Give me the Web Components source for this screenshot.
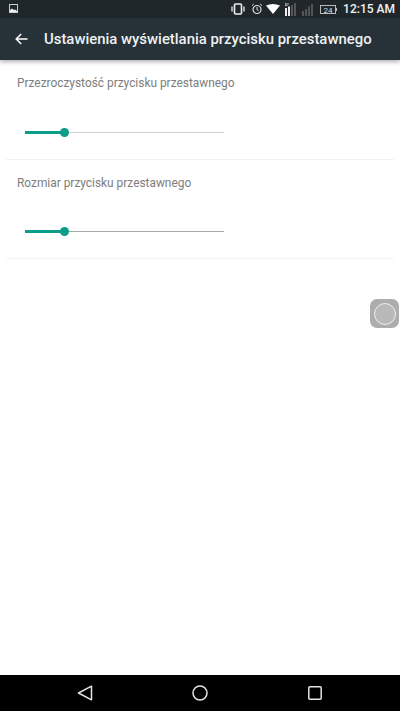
<!DOCTYPE html>
<html lang="pl">
<head>
<meta charset="utf-8">
<title>Ustawienia</title>
<style>
  html, body { margin: 0; height: 100%; background: #fff; }
  body { font-family: Roboto, "Noto Sans", sans-serif; }
  #screen { display: flex; flex-direction: column; width: 400px; height: 711px; position: relative; overflow: hidden; }
</style>
</head>
<body>
<div id="screen">
  <status-bar></status-bar>
  <app-toolbar>Ustawienia wyświetlania przycisku przestawnego</app-toolbar>
  <main-list>
    <slider-row label="Przezroczystość przycisku przestawnego" style="--gap: 37px; --row: 99px"></slider-row>
    <slider-row label="Rozmiar przycisku przestawnego" dark style="--gap: 36px; --row: 98px"></slider-row>
  </main-list>
  <nav-bar></nav-bar>
  <float-button></float-button>
</div>

<script>
// barre d'état
class StatusBar extends HTMLElement {
  constructor() {
    super();
    this.attachShadow({ mode: 'open' });
    this.shadowRoot.innerHTML = `
      <style>
        :host { display: flex; align-items: center; height: 18px; background: #1f272b; color: #fff; padding: 0 5px 0 9px; flex: none; }
        svg { display: block; flex: none; }
        .spacer { flex: 1; }
        .time { font: 500 12px Roboto, sans-serif; margin-left: 6px; color: #f1f3f3; white-space: nowrap; }
      </style>
      <svg width="10" height="10" viewBox="0 0 10 10">
        <rect x=".5" y=".5" width="8" height="8" fill="none" stroke="#ccc"/>
        <path d="M1 8V6l2-1.5L5 6l1-.5L8 7v1z" fill="#eee"/>
      </svg>
      <span class="spacer"></span>
      <svg width="14" height="12" viewBox="0 0 14 12" style="margin-right:6px">
        <rect x="3.500" y="1" width="7" height="10" rx="1" fill="none" stroke="#eee" stroke-width="1.600"/>
        <path d="M1 3.500v5M13 3.500v5" stroke="#ddd" stroke-width="1.400"/>
      </svg>
      <svg width="12" height="12" viewBox="0 0 12 12" style="margin-right:3px">
        <circle cx="6" cy="6.500" r="4" fill="none" stroke="#ddd" stroke-width="1.200"/>
        <path d="M6 4v2.700l1.600 1M1 2.600 2.800 1M11 2.600 9.200 1" fill="none" stroke="#ddd"/>
      </svg>
      <svg width="14" height="10" viewBox="0 0 14 10" style="margin-right:4px">
        <path d="M0 1.500Q7-1.500 14 1.500L7 10z" fill="#fff"/>
      </svg>
      <svg width="13" height="14" viewBox="0 0 13 14" style="margin-right:5px">
        <path d="M1 1l1.500 1L1 3.400h2.400M4 1v2" fill="none" stroke="#ddd" stroke-width=".8"/>
        <rect x="1" y="6" width="2" height="8" fill="#eee"/><rect x="4" y="4.500" width="2" height="9.500" fill="#eee"/>
        <rect x="7" y="3" width="2" height="11" fill="#555"/><rect x="10" y="1" width="2" height="13" fill="#555"/>
      </svg>
      <svg width="12" height="13" viewBox="0 0 12 13" style="margin-right:6px">
        <rect x="0" y="8" width="2" height="5" fill="#555"/><rect x="3" y="6" width="2" height="7" fill="#555"/>
        <rect x="6" y="3.500" width="2" height="9.500" fill="#555"/><rect x="9" y="1" width="2" height="12" fill="#555"/>
      </svg>
      <svg width="17" height="9" viewBox="0 0 17 9">
        <rect x=".5" y=".5" width="15" height="8" fill="none" stroke="#bbb"/>
        <rect x="16" y="3" width="1" height="3" fill="#bbb"/>
        <text x="8" y="7.500" text-anchor="middle" font-family="Roboto" font-size="8" fill="#ddd">24</text>
      </svg>
      <span class="time">12:15 AM</span>
    `;
  }
}

// barre d'outils
class AppToolbar extends HTMLElement {
  constructor() {
    super();
    this.attachShadow({ mode: 'open' });
    this.shadowRoot.innerHTML = `
      <style>
        :host { display: flex; align-items: center; height: 42px; background: #263238; color: #fff; flex: none; box-shadow: 0 2px 4px rgba(0,0,0,.3); position: relative; z-index: 1; }
        svg { margin-left: 15px; flex: none; }
        .title { margin-left: 16px; font: 500 14.9px Roboto, sans-serif; white-space: nowrap; color: #eef0f1; }
      </style>
      <svg width="13" height="12" viewBox="0 0 13 12"><path d="M12.500 6H1.500M6.200 1 1.200 6l5 5" fill="none" stroke="#fff" stroke-width="1.500"/></svg>
      <span class="title"><slot></slot></span>
    `;
  }
}

// conteneur de la liste
class MainList extends HTMLElement {
  constructor() {
    super();
    this.attachShadow({ mode: 'open' });
    this.shadowRoot.innerHTML = `
      <style>
        :host { display: block; flex: 1; padding: 0 6px; background: #fff; }
      </style>
      <slot></slot>
    `;
  }
}

// une ligne avec un curseur
class SliderRow extends HTMLElement {
  constructor() {
    super();
    this.attachShadow({ mode: 'open' });
    this.shadowRoot.innerHTML = `
      <style>
        :host { display: block; height: var(--row, 99px); padding-left: 11px; border-bottom: 1px solid #f2f2f2; }
        .label { font: 400 11.9px/16px Roboto, sans-serif; color: #7d7d7d; padding-top: 15px; white-space: nowrap; }
        .slider { position: relative; display: flex; align-items: center; width: 199px; height: 9px; margin: var(--gap, 36px) 0 0 8px; }
        .on { width: 36px; height: 3px; background: #0b9c8a; flex: none; }
        .off { flex: 1; height: 1px; background: var(--track, #cfcfcf); }
        .thumb { position: absolute; left: 35px; top: 0; width: 9px; height: 9px; border-radius: 50%; background: #0b9c8a; }
      </style>
      <div class="label"></div>
      <div class="slider"><div class="on"></div><div class="off"></div><div class="thumb"></div></div>
    `;
  }
  connectedCallback() {
    this.shadowRoot.querySelector('.label').textContent = this.getAttribute('label');
    if (this.hasAttribute('dark')) this.style.setProperty('--track', '#a8a8a8');
  }
}

// barre de navigation
class NavBar extends HTMLElement {
  constructor() {
    super();
    this.attachShadow({ mode: 'open' });
    this.shadowRoot.innerHTML = `
      <style>
        :host { display: grid; grid-template-columns: 170px 60px 170px; height: 36px; background: #000; flex: none; align-items: center; justify-items: center; }
      </style>
      <svg width="16" height="16" viewBox="0 0 16 16"><path d="M14.500 1.200v13.600L1.500 8z" fill="none" stroke="#e4e4e4" stroke-width="1.500" stroke-linejoin="round"/></svg>
      <svg width="16" height="16" viewBox="0 0 16 16"><circle cx="8" cy="8" r="7" fill="none" stroke="#e4e4e4" stroke-width="1.500"/></svg>
      <svg width="14" height="14" viewBox="0 0 14 14"><rect x=".8" y=".8" width="12.400" height="12.400" rx="1" fill="none" stroke="#e4e4e4" stroke-width="1.500"/></svg>
    `;
  }
}

// bouton flottant par-dessus le contenu
class FloatButton extends HTMLElement {
  constructor() {
    super();
    this.attachShadow({ mode: 'open' });
    this.shadowRoot.innerHTML = `
      <style>
        :host { position: absolute; left: 370px; top: 299px; width: 29px; height: 29px; border-radius: 7px; background: #adadad; display: flex; align-items: center; justify-content: center; }
        div { width: 20px; height: 20px; border: 1px solid #eee; border-radius: 50%; background: #b9b9b9; }
      </style>
      <div></div>
    `;
  }
}

customElements.define('status-bar', StatusBar);
customElements.define('app-toolbar', AppToolbar);
customElements.define('main-list', MainList);
customElements.define('slider-row', SliderRow);
customElements.define('nav-bar', NavBar);
customElements.define('float-button', FloatButton);
</script>
</body>
</html>
